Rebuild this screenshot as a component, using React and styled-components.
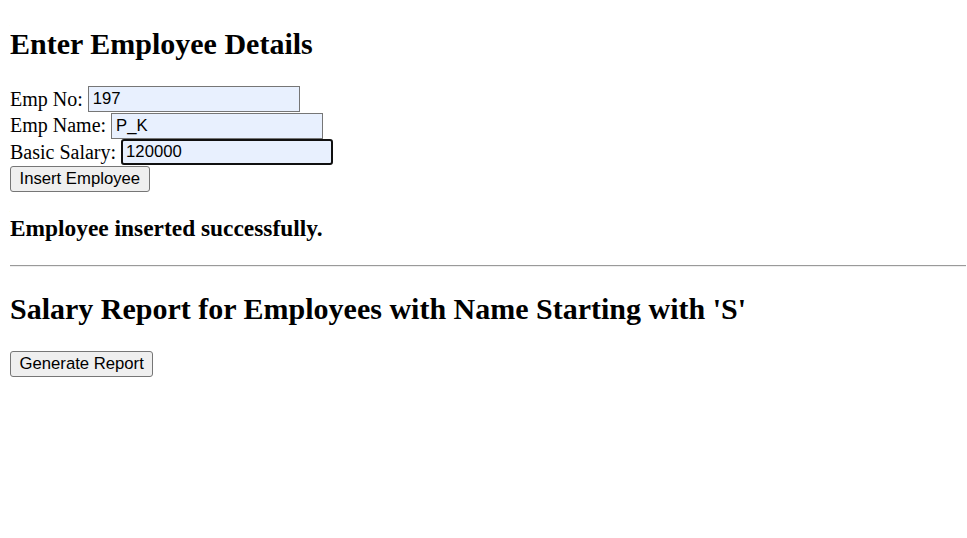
import styled, { createGlobalStyle } from "styled-components";

const GlobalStyle = createGlobalStyle`
    body {
        margin: 10px 1px 10px 10px;
        background: #fff;
        color: #000;
        font-family: "Liberation Serif", "Times New Roman", serif;
        font-size: 20px;
    }
`

const Page = () => {

    const fields = [
        { id: "empno", label: "Emp No:", value: "197" },
        { id: "empname", label: "Emp Name:", value: "P_K" },
        { id: "salary", label: "Basic Salary:", value: "120000", focused: true }
    ]

    return (<>
        <GlobalStyle />

        <Title $top="17px">Enter Employee Details</Title>

        <Form onSubmit={e => e.preventDefault()}>
            {fields.map(field => (
                <Field key={field.id}>
                    <label htmlFor={field.id}>{field.label}</label>
                    <Input id={field.id} defaultValue={field.value} $focused={field.focused} />
                </Field>
            ))}
            <Button type="submit">Insert Employee</Button>
        </Form>

        <Message>Employee inserted successfully.</Message>

        <Divider />

        <Title>Salary Report for Employees with Name Starting with 'S'</Title>

        <Form onSubmit={e => e.preventDefault()}>
            <Button type="submit">Generate Report</Button>
        </Form>
    </>)
}

export default Page

const Title = styled.h2`
    font-size: 30px;
    font-weight: bold;
    margin: 25px 0;
    margin-top: ${p => p.$top || "25px"};
`
const Form = styled.form`
    margin: 0;
`
const Field = styled.div`
    line-height: 23px;
    height: 26.5px;
    display: flex;
    align-items: center;
    gap: 5px;
`
const Input = styled.input`
    box-sizing: border-box;
    width: 212px;
    height: 26px;
    padding: 1px 3px;
    font-family: "Liberation Sans", Arial, sans-serif;
    font-size: 16.7px;
    color: #000;
    background: #e8f0fe;
    border: ${p => p.$focused ? "2px solid #101010" : "1px solid #767676"};
    border-radius: ${p => p.$focused ? "3px" : "0"};
    padding-left: ${p => p.$focused ? "3px" : "4px"};
    outline: none;
`
const Button = styled.button`
    box-sizing: border-box;
    height: 26px;
    padding: 1px 8.5px;
    font-family: "Liberation Sans", Arial, sans-serif;
    font-size: 16.7px;
    color: #000;
    background: #efefef;
    border: 1px solid #767676;
    border-radius: 3px;
`
const Message = styled.h3`
    font-size: 23.4px;
    font-weight: bold;
    margin: 23px 0;
`
const Divider = styled.hr`
    margin: 10px 0;
    border: 0;
    border-top: 1px solid #9a9a9a;
    border-bottom: 1px solid #eeeeee;
`
